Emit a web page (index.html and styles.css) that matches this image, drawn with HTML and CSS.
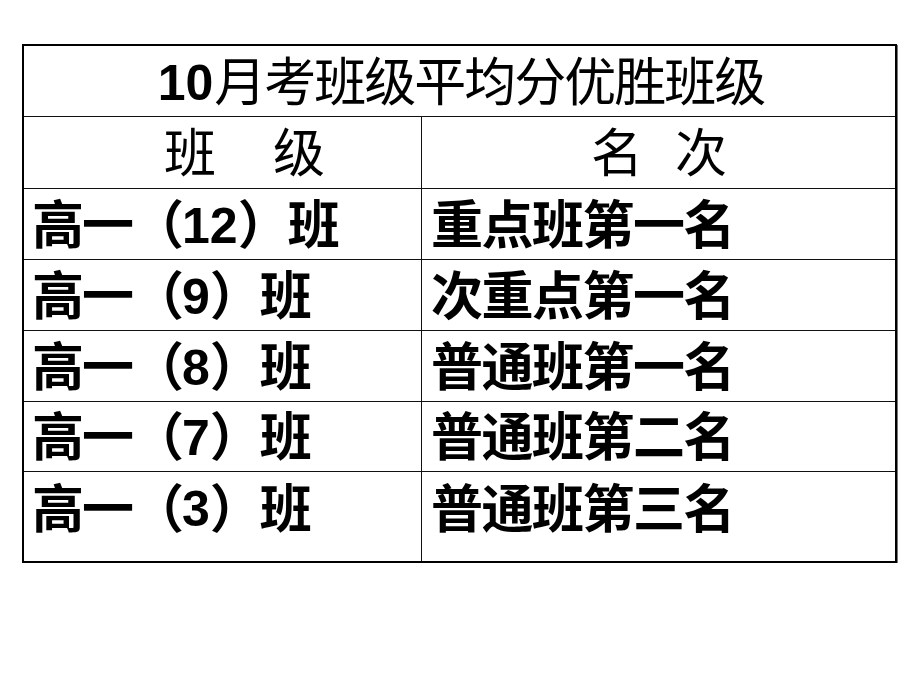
FILE: index.html
```html
<!DOCTYPE html>
<html lang="zh">
<head>
<meta charset="utf-8">
<title>10月考班级平均分优胜班级</title>
<link rel="stylesheet" href="styles.css">
</head>
<body>
<div class="page">
  <div class="board">
    <div class="cell title"><span class="num">10</span>月考班级平均分优胜班级</div>
    <div class="cell head left head-left"><span>班</span><span class="gap-l"></span><span>级</span></div>
    <div class="cell head right head-right"><span>名</span><span class="gap-r"></span><span>次</span></div>

    <div class="cell body left">高一（<span class="num">12</span>）班</div>
    <div class="cell body right">重点班第一名</div>

    <div class="cell body left">高一（<span class="num">9</span>）班</div>
    <div class="cell body right">次重点第一名</div>

    <div class="cell body left">高一（<span class="num">8</span>）班</div>
    <div class="cell body right">普通班第一名</div>

    <div class="cell body left">高一（<span class="num">7</span>）班</div>
    <div class="cell body right">普通班第二名</div>

    <div class="cell body left last">高一（<span class="num">3</span>）班</div>
    <div class="cell body right last">普通班第三名</div>
  </div>
</div>
</body>
</html>
```

FILE: styles.css
```css
html, body {
  margin: 0;
  padding: 0;
  background: #ffffff;
}

.page {
  padding: 44px 0 0 22px;
  font-family: "Liberation Sans", "Noto Sans CJK SC", sans-serif;
  color: #000;
}

.board {
  display: grid;
  grid-template-columns: 398px 473px;
  grid-template-rows: 71px 72px 71px 71px 71px 70px 89px;
  width: max-content;
  border: 2px solid #000;
  box-shadow: 1px 1px 0 #777;
}

.cell {
  box-sizing: border-box;
  border-bottom: 1px solid #111;
  display: flex;
  align-items: center;
  font-size: 52px;
  letter-spacing: -2px;
  line-height: 1;
  white-space: nowrap;
}

.cell .num {
  font-size: 50px;
  letter-spacing: 0;
}

.cell.last {
  border-bottom: none;
  align-items: flex-start;
  padding-top: 12px;
}

.left {
  border-right: 1px solid #111;
}

.title {
  grid-column: 1 / 3;
  justify-content: center;
  font-weight: 400;
  padding-top: 3px;
  padding-left: 3px;
}

.title .num {
  font-weight: 700;
  margin-right: 1px;
}

.head {
  font-weight: 400;
  padding-top: 2px;
}

.head-left {
  padding-left: 140px;
}

.head-right {
  justify-content: center;
  padding-right: 1px;
}

.gap-l {
  display: inline-block;
  width: 59px;
}

.gap-r {
  display: inline-block;
  width: 34px;
}

.body {
  font-weight: 700;
  padding-top: 3px;
  padding-left: 8px;
}

.body.right {
  padding-left: 9px;
  letter-spacing: -1.5px;
}
```
